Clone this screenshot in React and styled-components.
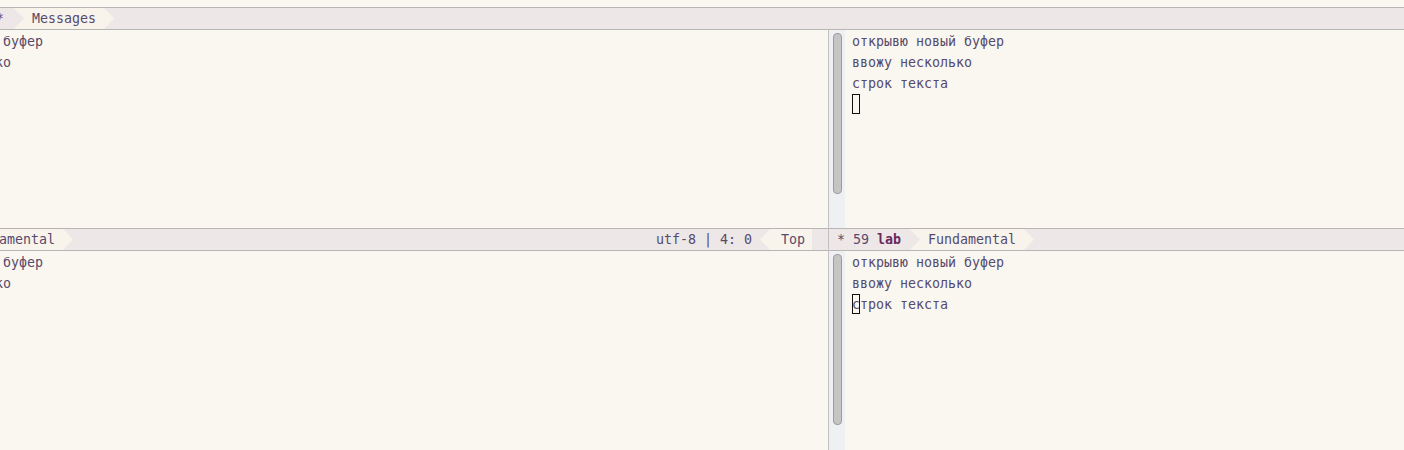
import React from 'react'
import styled, { createGlobalStyle } from 'styled-components'

const GlobalStyle = createGlobalStyle`
  html, body {
    margin: 0;
    padding: 0;
    background: #faf7f0;
  }
`

const GRAY = '#ede7e7'
const CREAM = '#f8f4ec'
const INK = '#574a6c'

const Frame = styled.div`
  width: 1404px;
  height: 450px;
  overflow: hidden;
  display: flex;
  flex-direction: column;
  background: #faf7f0;
  font-family: 'DejaVu Sans Mono', 'Liberation Mono', monospace;
  font-size: 13.3px;
  color: ${INK};
`

const TopStrip = styled.div`
  height: 7px;
  flex: none;
`

const ModeLine = styled.div`
  flex: none;
  height: 21px;
  border-top: 1px solid #b8b6b4;
  border-bottom: 1px solid #b8b6b4;
  background: ${GRAY};
  display: flex;
  align-items: stretch;
  line-height: 21px;
  white-space: pre;
  overflow: hidden;
`

const Seg = styled.div`
  flex: none;
  display: flex;
  align-items: center;
  background: ${p => (p.$light ? CREAM : GRAY)};
  padding: ${p => p.$pad || '0 8px'};
  margin-left: ${p => p.$shift || '0'};
`

const RightGroup = styled.div`
  margin-left: auto;
  display: flex;
  align-items: stretch;
`

const Star = styled.span`
  color: #7a3a6c;
`

const Bold = styled.span`
  color: #6a2a5c;
  font-weight: bold;
`

const Split = styled.div`
  flex: 1;
  display: flex;
  min-height: 0;
`

const Column = styled.div`
  display: flex;
  flex-direction: column;
  flex: ${p => (p.$grow ? '1' : 'none')};
  width: ${p => (p.$grow ? 'auto' : '960px')};
  margin-left: ${p => p.$shift || '0'};
  border-right: ${p => (p.$divider ? '1px solid #c3c1c0' : 'none')};
  min-width: 0;
`

const Pane = styled.div`
  display: flex;
  height: ${p => p.$h}px;
  flex: none;
  overflow: hidden;
`

const ScrollCol = styled.div`
  flex: none;
  width: 16px;
  background: #eef0f3;
  padding: 3px 0 0 4px;
  box-sizing: border-box;
`

const Thumb = styled.div`
  width: 9px;
  box-sizing: border-box;
  border: 1px solid #9c9c9c;
  border-radius: 4px;
  background: #c6c5c5;
`

const Text = styled.div`
  padding: 1px 0 0 7px;
  line-height: 21px;
  white-space: pre;
`

const Line = styled.div`
  height: 21px;
`

const Cursor = styled.span`
  display: inline-block;
  width: 8px;
  height: 20px;
  vertical-align: top;
  box-sizing: border-box;
  outline: 1px solid #111;
  outline-offset: -1px;
`

function Arrow({ from, to, left }) {
  return (
    <svg width="10" height="21" viewBox="0 0 10 21" style={{ flex: 'none', display: 'block' }}>
      <rect width="10" height="21" fill={to} />
      {left ? (
        <polygon points="10,0 0,10.5 10,21" fill={CREAM} />
      ) : (
        <polygon points="0,0 10,10.5 0,21" fill={from} />
      )}
    </svg>
  )
}

function WindowMode({ right }) {
  return (
    <ModeLine>
      <Seg $pad="0 9px 0 8px">
        * 59 <Bold>lab</Bold>
      </Seg>
      <Arrow from={GRAY} to={CREAM} />
      <Seg $light>Fundamental</Seg>
      <Arrow from={CREAM} to={GRAY} />
      {right && (
        <RightGroup>
          <Seg $pad="0 8px 0 0">utf-8 | 4: 0</Seg>
          <Arrow left from={GRAY} to={GRAY} />
          <Seg $light $pad="0 7px 0 11px">Top</Seg>
          <Seg $pad="0 0 0 16px" />
        </RightGroup>
      )}
    </ModeLine>
  )
}

function Body({ h, thumb, cursorLine }) {
  return (
    <Pane $h={h}>
      <ScrollCol>
        <Thumb style={{ height: thumb }} />
      </ScrollCol>
      <Text>
        <Line>открывю новый буфер</Line>
        <Line>ввожу несколько</Line>
        {cursorLine ? (
          <Line>строк текста</Line>
        ) : (
          <Line>
            <Cursor>с</Cursor>трок текста
          </Line>
        )}
        {cursorLine && (
          <Line>
            <Cursor> </Cursor>
          </Line>
        )}
      </Text>
    </Pane>
  )
}

export default function App() {
  return (
    <>
      <GlobalStyle />
      <Frame>
        <TopStrip />
        <ModeLine>
          <Seg $shift="-4px" $pad="0 10px 0 0">
            <Star>*</Star>
          </Seg>
          <Arrow from={GRAY} to={CREAM} />
          <Seg $light>Messages</Seg>
          <Arrow from={CREAM} to={GRAY} />
        </ModeLine>
        <Split>
          <Column $shift="-132px" $divider>
            <Body h={198} thumb={161} cursorLine />
            <WindowMode right />
            <Body h={199} thumb={171} />
          </Column>
          <Column $grow>
            <Body h={198} thumb={161} cursorLine />
            <WindowMode />
            <Body h={199} thumb={171} />
          </Column>
        </Split>
      </Frame>
    </>
  )
}
